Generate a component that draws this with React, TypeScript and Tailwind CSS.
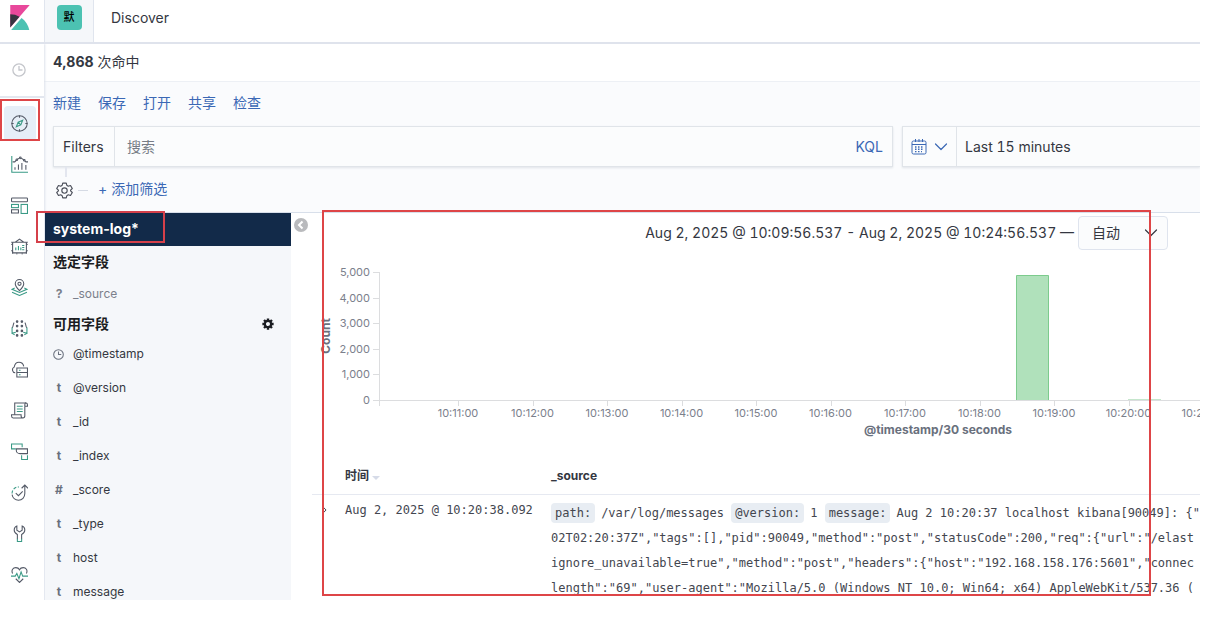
import React from 'react';

const DARK = '#535966';
const GREEN = '#3a9a86';

interface IconProps {
	children: React.ReactNode;
}

function AppIcon({ children }: IconProps) {
	return (
		<svg viewBox="0 0 32 32" fill="none" stroke={DARK} strokeWidth="2" className="w-[17px] h-[17px]" aria-hidden="true">
			{children}
		</svg>
	);
}

const navItems = [
	{
		label: 'Discover',
		icon: (
			<>
				<circle cx="16" cy="16" r="14.5" />
				<path d="M16 1v4M16 27v4M1 16h4M27 16h4" />
				<path stroke={GREEN} d="M22 10l-3.5 8.5L10 22l3.5-8.5zM13.5 13.5l5 5" />
			</>
		),
	},
	{
		label: 'Visualize',
		icon: (
			<>
				<path stroke={GREEN} d="M1.500 0v30.500H32" />
				<path d="M7.500 26v-5M14 26V16M20.500 26V13M28 26v-9" />
				<path d="M3 11h4l3-3M12 6l4-2M19 4l5 3M26 9l2 2h4" />
				<circle cx="11" cy="7" r="1.500" />
				<circle cx="17.500" cy="3.500" r="1.500" />
				<circle cx="25" cy="8" r="1.500" />
			</>
		),
	},
	{
		label: 'Dashboard',
		icon: (
			<>
				<rect x="1" y="2" width="30" height="7" rx="1.500" />
				<rect stroke={GREEN} x="1" y="14" width="13" height="6" />
				<path d="M1 24h13v6H1z" />
				<rect stroke={GREEN} x="19" y="14" width="12" height="17" />
			</>
		),
	},
	{
		label: 'Canvas',
		icon: (
			<>
				<path d="M3 8h26M3 28h26M3 8v20M29 8v20M8 8l8-6 8 6" />
				<path strokeWidth="1.500" d="M0 8h3v4H0M32 8h-3v4h3M0 24h3v6M32 24h-3v6M11 28v3M21 28v3" />
				<path stroke={GREEN} d="M9 23v-5M14 23v-8M18.500 23v-5M21 14h4M21 18h4M21 22h4" />
			</>
		),
	},
	{
		label: 'Maps',
		icon: (
			<>
				<path d="M16 22c-5-5-8-8.500-8-13a8 8 0 0 1 16 0c0 4.500-3 8-8 13z" />
				<circle cx="16" cy="9" r="3" />
				<path stroke={GREEN} d="M7 17l-5 2.500 14 6 14-6L25 17M2 25l14 6 14-6" />
			</>
		),
	},
	{
		label: 'Machine Learning',
		icon: (
			<>
				<g fill={DARK}>
					<circle cx="11.500" cy="3" r="1.500" />
					<circle cx="20.500" cy="3" r="1.500" />
					<circle cx="11.500" cy="11.500" r="1.500" />
					<circle cx="20.500" cy="11.500" r="1.500" />
					<circle cx="11.500" cy="20.500" r="1.500" />
					<circle cx="20.500" cy="20.500" r="1.500" />
					<circle cx="11.500" cy="29" r="1.500" />
					<circle cx="20.500" cy="29" r="1.500" />
				</g>
				<path d="M6 5C3.500 7 5 12 2 15M26 5c2.500 2 1 7 4 10" />
				<path stroke={GREEN} d="M2 14v11l7-2M2 25l5 3M30 14v11l-7-2M30 25l-5 3" />
			</>
		),
	},
	{
		label: 'Infrastructure',
		icon: (
			<>
				<path d="M8 22a5.500 5.500 0 0 1-2-10.500C7 6 10 2.500 15 2.500c4.500 0 8 3 9 7.500" />
				<path d="M11 13h20v17H11zM11 21.500h20" />
				<path stroke={GREEN} d="M15 17.300h3M15 25.800h3" />
			</>
		),
	},
	{
		label: 'Logs',
		icon: (
			<>
				<path d="M7 24V2h21c2 0 3 1.500 3 3.500V8h-5M26 8V5c0-2 1-3 2.500-3" />
				<path d="M26 8v18c0 2.500-1 4-3.500 4H4c-2 0-3-1.500-3-4v-2h18v2c0 2.500 1 4 3.500 4" />
				<path stroke={GREEN} d="M11 8h11M11 13h11M11 18h11" />
			</>
		),
	},
	{
		label: 'APM',
		icon: (
			<>
				<path stroke={GREEN} d="M9 11H1V2h20v6" />
				<path d="M10 11h21v9H17c-4 0-7-3-7-6z" />
				<path stroke={GREEN} d="M20 23v8h11v-8" />
			</>
		),
	},
	{
		label: 'Uptime',
		icon: (
			<>
				<path d="M2 20c1 6 6 10.500 12 10.500C21 30.500 26 25 26 18V3M20 8l6-6 6 6" />
				<path stroke={GREEN} strokeDasharray="6 3" d="M2 18C2 11 7 5.500 15 5.500" />
				<path d="M9 17l5 5 8-8" />
			</>
		),
	},
	{
		label: 'Dev Tools',
		icon: (
			<>
				<path d="M12 27v-9C8 16 6 13 6 9.500 6 6 8 3 11 2v8l5 3 5-3V2c3 1 5 4 5 7.500 0 3.500-2 6.500-6 8.500v9" />
				<path stroke={GREEN} d="M12 26v5h8v-5" />
			</>
		),
	},
	{
		label: 'Stack Monitoring',
		icon: (
			<>
				<path d="M3 14C0 8 4 3 9 3c4 0 6 2 7 4 1-2 3-4 7-4 5 0 9 5 6 11M9 24l7 7 7-7" />
				<path stroke={GREEN} d="M0 19h8l3-5 4 10 4-13 3 8h10" />
			</>
		),
	},
];

const menu = ['新建', '保存', '打开', '共享', '检查'];

const fields = [
	{ type: 'date', name: '@timestamp' },
	{ type: 't', name: '@version' },
	{ type: 't', name: '_id' },
	{ type: 't', name: '_index' },
	{ type: '#', name: '_score' },
	{ type: 't', name: '_type' },
	{ type: 't', name: 'host' },
	{ type: 't', name: 'message' },
];

const yTicks = ['0', '1,000', '2,000', '3,000', '4,000', '5,000'];
const xTicks = ['10:11:00', '10:12:00', '10:13:00', '10:14:00', '10:15:00', '10:16:00', '10:17:00', '10:18:00', '10:19:00', '10:20:00', '10:21:00'];

function ChevronDown() {
	return (
		<svg viewBox="0 0 14 8" fill="none" stroke="currentColor" strokeWidth="1.2" className="w-[14px] h-2" aria-hidden="true">
			<path d="M1.500 1L7 6.500 12.500 1" strokeLinecap="round" strokeLinejoin="round" />
		</svg>
	);
}

function ClockIcon({ className }: { className: string }) {
	return (
		<svg viewBox="0 0 16 16" fill="none" stroke="currentColor" strokeWidth="1.5" className={className} aria-hidden="true">
			<circle cx="8" cy="8" r="7" />
			<path d="M8 3.500V8h4" />
		</svg>
	);
}

function Header() {
	return (
		<header className="flex h-11 shrink-0 border-b-2 border-[#dfe3ec]">
			<a href="#home" aria-label="Kibana" className="w-[44px] shrink-0 flex items-center pl-[10px] pb-[7px]">
				<svg viewBox="0 0 25 32" className="w-5 h-[25px]">
					<path fill="#e8489b" d="M0 0v28.789L24.935.017z" />
					<path fill="#353540" d="M0 12v16.789l11.906-13.738A24.721 24.721 0 0 0 0 12" />
					<path fill="#4cc2b2" d="M14.479 16.664L1.195 31.991h23.191c-1.252-6.292-4.883-11.719-9.907-15.327" />
				</svg>
			</a>
			<div className="w-[50px] shrink-0 flex items-center justify-center pb-[7px] bg-[#f5f7fa] border-x border-[#e0e5ee]">
				<button aria-label="默认" className="size-[25px] rounded bg-[#4cc2b2] text-[11px] font-medium text-black">默</button>
			</div>
			<h1 className="flex items-center pl-[17px] pb-[7px]">Discover</h1>
		</header>
	);
}

function SideNav() {
	return (
		<nav className="w-11 shrink-0 shadow-[1px_0_2px_#dde2eb] relative">
			<div className="h-[54px] flex items-center pl-3 border-b-2 border-[#e3e7ef]">
				<button aria-label="Recently viewed" className="text-[#c4c6cb]">
					<ClockIcon className="size-[14px]" />
				</button>
			</div>
			<ul className="pt-[5px]">
				{navItems.map((item, i) => (
					<li key={item.label} className="relative h-[41px]">
						<a
							href="#app"
							aria-label={item.label}
							className={i === 0 ? 'h-[35px] w-8 ml-1 pl-[7px] flex items-center rounded bg-[#e6eef7] relative top-[3px]' : 'h-full flex items-center pl-[11px]'}
						>
							<AppIcon>{item.icon}</AppIcon>
						</a>
						{i === 0 && <span className="absolute left-0 -top-1 w-10 h-[42px] border-2 border-[#de4547]" />}
					</li>
				))}
			</ul>
		</nav>
	);
}

function QueryBar() {
	return (
		<section className="bg-[#fafbfd] border-b border-[#d8dfea] text-[#3b68b5] pl-[9px]">
			<div className="h-[42px] mb-0.5 flex items-center gap-[17px]">
				{menu.map((label) => (
					<button key={label}>{label}</button>
				))}
			</div>
			<div className="flex h-[41px] gap-[9px]">
				<div className="flex flex-1 border border-[#e0e4e9] shadow-[0_1px_2px_#e0e4e9] bg-[#fbfcfd]">
					<label htmlFor="query" className="flex items-center w-[61px] pl-[9px] border-r border-[#e0e4e9] text-[#343741]">Filters</label>
					<input id="query" placeholder="搜索" className="flex-1 min-w-0 pl-3 outline-none text-[#343741] placeholder:text-[#777c86]" />
					<button className="px-[9px]">KQL</button>
				</div>
				<div className="flex w-[298px] border border-r-0 border-[#e0e4e9] shadow-[0_1px_2px_#e0e4e9] bg-[#fbfcfd]">
					<button aria-label="Quick select" className="flex items-center justify-center gap-[7px] w-[54px] border-r border-[#e0e4e9]">
						<svg viewBox="0 0 16 16" fill="none" stroke="currentColor" className="size-4" aria-hidden="true">
							<rect x="1" y="2" width="14" height="13" rx="1.500" />
							<path d="M1 5.500h14M4.500 0v3M8 0v3M11.500 0v3" />
							<path strokeWidth="1.400" strokeDasharray="1.500 1.500" d="M4 8h9M4 10.300h9M4 12.600h7" />
						</svg>
						<ChevronDown />
					</button>
					<button className="flex-1 text-left pl-2 text-[#343741] tabular-nums">Last 15 minutes</button>
				</div>
			</div>
			<div className="relative h-[45px] flex items-center pl-[3px] pb-0.5">
				<span className="absolute left-3 top-0 w-0.5 h-[10px] bg-[#e3e6ef]" />
				<button aria-label="Filter options" className="text-[#4b4f5a] pt-[3px]">
					<svg viewBox="0 0 24 24" fill="none" stroke="currentColor" strokeWidth="1.600" className="size-[17px]" aria-hidden="true">
						<path strokeLinejoin="round" d="M9.500 1.500h5l.8 3.200 2 1.200 3.200-1 2.500 4.300-2.400 2.300v1l2.400 2.300-2.500 4.300-3.200-1-2 1.200-.8 3.200h-5l-.8-3.200-2-1.200-3.200 1L1 14.800l2.400-2.300v-1L1 9.200l2.500-4.300 3.200 1 2-1.200z" />
						<circle cx="12" cy="12" r="3.800" />
					</svg>
				</button>
				<span className="w-[10px] h-px ml-[5px] mr-[10px] mt-[3px] bg-[#d5dae4]" />
				<button>+ 添加筛选</button>
			</div>
		</section>
	);
}

function FieldSidebar() {
	return (
		<aside className="relative w-[247px] shrink-0 bg-[#f5f7fa] border-l border-[#e4e8f0]">
			<button className="block w-full h-[33px] pl-2 pb-0.5 text-left font-bold text-white bg-[#122a49]">system-log*</button>
			<span className="absolute -left-[9px] -top-0.5 w-[129px] h-8 border-2 border-[#d5404a]" />
			<h2 className="h-8 pl-2 flex items-center font-bold text-[#1a1c21]">选定字段</h2>
			<div className="h-8 pl-2 flex items-center text-xs text-[#7b808b]">
				<span className="w-3 mr-2 text-center font-bold">?</span>
				_source
			</div>
			<div className="h-[27px] pl-2 pr-[17px] flex items-center justify-between text-[#1a1c21]">
				<h2 className="font-bold">可用字段</h2>
				<button aria-label="Field filters">
					<svg viewBox="0 0 16 16" fill="none" stroke="currentColor" className="size-3" aria-hidden="true">
						<circle cx="8" cy="8" r="4.200" strokeWidth="3" />
						<path strokeWidth="3.200" d="M8 .5v3M8 12.500v3M.5 8h3M12.500 8h3M2.700 2.700l2 2M11.300 11.300l2 2M13.300 2.700l-2 2M4.700 11.300l-2 2" />
					</svg>
				</button>
			</div>
			<ul className="text-xs">
				{fields.map((field) => (
					<li key={field.name} className="h-[34px] pl-2 flex items-center">
						<span className="w-3 mr-2 text-center font-bold text-[#69707d]">
							{field.type === 'date' ? <ClockIcon className="size-[11px]" /> : field.type}
						</span>
						{field.name}
					</li>
				))}
			</ul>
		</aside>
	);
}

function Histogram() {
	return (
		<svg className="block w-full h-[200px] text-[11px]" fill="#7b808c" role="img" aria-label="Count per 30 seconds">
			<path d="M67.500 22v134M61 150.500H1400" stroke="#dcdddf" fill="none" />
			{yTicks.map((label, i) => (
				<g key={label}>
					<path d={`M61 ${150.5 - Math.round(i * 25.6)}h6`} stroke="#dcdddf" />
					<text x="58" y={154 - Math.round(i * 25.6)} textAnchor="end">{label}</text>
				</g>
			))}
			{xTicks.map((label, i) => (
				<g key={label}>
					<path d={`M${Math.round(146 + i * 74.5) + 0.5} 151v5`} stroke="#dcdddf" />
					<text x={146 + i * 74.5} y="167" textAnchor="middle">{label}</text>
				</g>
			))}
			<path d="M704.500 150V25.500h32V150" fill="#b0e1bb" stroke="#7ccb8d" />
			<path d="M816 149.500h33" stroke="#c5e6cc" />
			<text x="626" y="184" textAnchor="middle" className="text-xs font-bold" fill="#69707d">@timestamp/30 seconds</text>
			<text transform="translate(18 86) rotate(-90)" textAnchor="middle" className="text-xs font-bold" fill="#69707d">Count</text>
		</svg>
	);
}

function Tag({ children }: { children: React.ReactNode }) {
	return <span className="inline-block h-5 leading-5 px-1 mr-1.5 rounded bg-[#e8edf3]">{children}</span>;
}

function DocTable() {
	return (
		<table className="w-full table-fixed text-xs text-left">
			<thead>
				<tr className="h-[44px] border-b border-[#e6e9f1]">
					<th className="w-[33px]" aria-label="Expand" />
					<th className="w-[206px] pt-2 font-bold">
						时间
						<span className="inline-block ml-[3px] border-x-4 border-x-transparent border-t-4 border-t-[#d6dbe8]" />
					</th>
					<th className="pt-2 font-bold">_source</th>
				</tr>
			</thead>
			<tbody className="align-top font-['DejaVu_Sans_Mono',monospace] leading-[25px] whitespace-nowrap text-[#43464f]">
				<tr>
					<td className="pt-[3px] pl-2">
						<button aria-label="Toggle row details" className="block h-6">
							<svg viewBox="0 0 8 12" fill="none" stroke="currentColor" strokeWidth="1.200" className="w-2 h-[10px]" aria-hidden="true">
								<path d="M2 1.500L6.500 6 2 10.500" />
							</svg>
						</button>
					</td>
					<td className="pt-[3px]">Aug 2, 2025 @ 10:20:38.092</td>
					<td className="pt-1.5 overflow-hidden">
						<div>
							<Tag>path:</Tag>/var/log/messages <Tag>@version:</Tag>1 <Tag>message:</Tag>Aug 2 10:20:37 localhost kibana[90049]: {'{"'}
						</div>
						<div>{'02T02:20:37Z","tags":[],"pid":90049,"method":"post","statusCode":200,"req":{"url":"/elast'}</div>
						<div>{'ignore_unavailable=true","method":"post","headers":{"host":"192.168.158.176:5601","connec'}</div>
						<div>{'length":"69","user-agent":"Mozilla/5.0 (Windows NT 10.0; Win64; x64) AppleWebKit/537.36 ('}</div>
					</td>
				</tr>
			</tbody>
		</table>
	);
}

export default function App() {
	return (
		<div className="h-screen pr-[18px] pb-9 bg-white text-sm text-[#343741] font-['Inter','Noto_Sans_CJK_SC',sans-serif]">
			<div className="h-full flex flex-col overflow-hidden">
				<Header />
				<div className="flex flex-1 min-h-0">
					<SideNav />
					<main className="flex-1 min-w-0 flex flex-col">
						<div className="h-[38px] shrink-0 pl-[9px] pb-px flex items-center gap-1 border-b border-[#edf0f5]">
							<strong>4,868</strong> 次命中
						</div>
						<QueryBar />
						<div className="flex flex-1 min-h-0">
							<FieldSidebar />
							<div className="w-[21px] shrink-0 pt-[5px] pl-[3px]">
								<button aria-label="Toggle sidebar" className="block">
									<svg viewBox="0 0 14 14" className="size-[14px]" aria-hidden="true">
										<circle cx="7" cy="7" r="7" fill="#b9babd" />
										<path d="M8.500 3.500L5 7l3.500 3.500" stroke="#fff" strokeWidth="2" fill="none" />
									</svg>
								</button>
							</div>
							<div className="relative flex-1 min-w-0">
								<div className="pt-[3px] pr-8 flex items-center justify-end gap-1">
									<label htmlFor="interval" className="tabular-nums">Aug 2, 2025 @ 10:09:56.537 - Aug 2, 2025 @ 10:24:56.537 —</label>
									<div className="relative w-[90px]">
										<select id="interval" className="appearance-none block w-full h-[34px] pl-[13px] rounded border border-[#dfe4ee] bg-[#fbfcfd]">
											<option>自动</option>
										</select>
										<span className="absolute right-[10px] top-[13px] pointer-events-none">
											<ChevronDown />
										</span>
									</div>
								</div>
								<Histogram />
								<DocTable />
								<span className="absolute left-[10px] -top-[3px] right-[49px] bottom-1 border-2 border-[#de4547] pointer-events-none" />
							</div>
						</div>
					</main>
				</div>
			</div>
		</div>
	);
}
